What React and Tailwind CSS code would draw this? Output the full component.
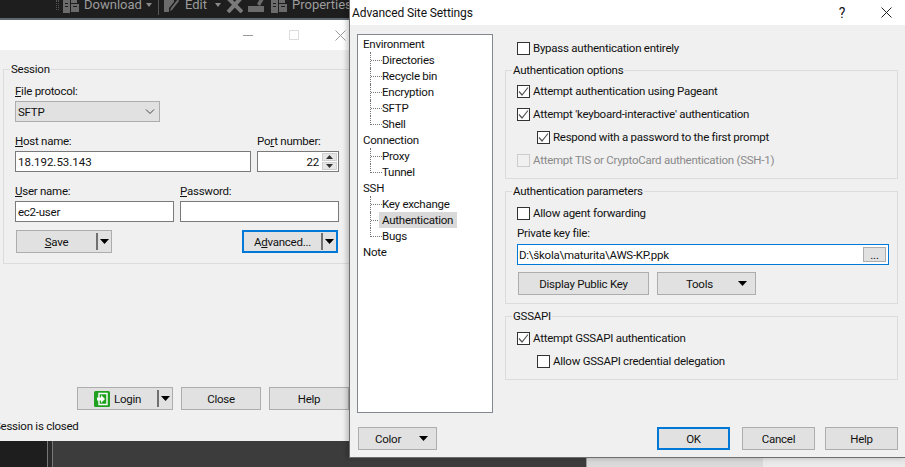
const FONT = "font-['Roboto','Open_Sans',sans-serif] text-[11.5px] tracking-[-0.25px] leading-4 text-[#111]";

const Btn = ({ children, focused, className = "" }) => (
  <div
    className={`flex h-[23px] items-center justify-center bg-[#e1e1e1] ${
      focused ? "border-2 border-[#0078d7]" : "border border-[#adadad]"
    } ${className}`}
  >
    {children}
  </div>
);

const Caret = () => (
  <svg width="9" height="5" viewBox="0 0 9 5" className="shrink-0">
    <path d="M0 0h9L4.5 5z" fill="#000" />
  </svg>
);

// button with the little divider + arrow on the right
const SplitBtn = ({ children, focused, className }) => (
  <Btn focused={focused} className={`pr-[2px] ${className}`}>
    <div className="flex flex-1 items-center justify-center gap-1">{children}</div>
    <div className="mr-[2px] h-[17px] w-[2px] bg-[#707070]" />
    <Caret />
  </Btn>
);

const Check = ({ label, checked, disabled, className = "" }) => (
  <div className={`flex h-4 items-center gap-[3px] ${className}`}>
    <div
      className={`flex h-[13px] w-[13px] shrink-0 items-center justify-center border ${
        disabled ? "border-[#cccccc] bg-[#f0f0f0]" : "border-[#333333] bg-white"
      }`}
    >
      {checked && (
        <svg width="11" height="11" viewBox="0 0 11 11">
          <path d="M1 5.5L4 9L10 1.5" fill="none" stroke="#555" strokeWidth="1.2" />
        </svg>
      )}
    </div>
    <span className={disabled ? "text-[#8a8a8a]" : ""}>{label}</span>
  </div>
);

const Group = ({ title, className = "", children }) => (
  <div className={`border border-[#dcdcdc] pl-[11px] ${className}`}>
    <div className="-mt-[9px] -ml-[5px] h-4 w-fit bg-[#f0f0f0] px-[1px]">{title}</div>
    {children}
  </div>
);

const Field = ({ children, className = "" }) => (
  <div className={`flex h-[21px] items-center border border-[#7a7a7a] bg-white px-[2px] ${className}`}>
    {children}
  </div>
);

const treeData = [
  { name: "Environment", kids: ["Directories", "Recycle bin", "Encryption", "SFTP", "Shell"] },
  { name: "Connection", kids: ["Proxy", "Tunnel"] },
  { name: "SSH", kids: ["Key exchange", "Authentication", "Bugs"] },
  { name: "Note", kids: [] },
];

const Tree = () => (
  <div className="h-[379px] w-[136px] shrink-0 border border-[#828790] bg-white pt-[1px] pl-[5px]">
    {treeData.map((node) => (
      <div key={node.name}>
        <div className="h-4">{node.name}</div>
        {node.kids.map((kid, i) => {
          const last = i === node.kids.length - 1;
          return (
            <div key={kid} className="flex h-4 pl-[7px]">
              {last ? (
                <div className="h-[9px] w-[12px] border-b border-l border-dotted border-[#777]" />
              ) : (
                <div className="flex h-4 w-[12px] items-center border-l border-dotted border-[#777]">
                  <div className="w-full border-t border-dotted border-[#777]" />
                </div>
              )}
              <span className={kid === "Authentication" ? "-ml-[3px] w-[78px] bg-[#d9d9d9] pl-[3px]" : ""}>
                {kid}
              </span>
            </div>
          );
        })}
      </div>
    ))}
  </div>
);

const DocIcon = () => (
  <svg width="16" height="16" viewBox="0 0 16 16" fill="#6b6b6b">
    <path d="M0 3h7v13H0zM8 1h6v5H8zM8 7h8v8H8z" />
    <path d="M2 6h3v1H2zM2 9h3v1H2zM10 9h4v1h-4z" fill="#1e1e1e" />
  </svg>
);

const BarCaret = () => (
  <svg width="6" height="4" viewBox="0 0 6 4" className="shrink-0">
    <path d="M0 0h6L3 4z" fill="#8a8a8a" />
  </svg>
);

const Toolbar = () => (
  <div className="h-[20px] shrink-0 border-b-2 border-[#5e686e] bg-[#1e1e1e]">
    <div className="flex h-[10px] items-center text-[13px] tracking-normal text-[#9c9c9c]">
      <div className="ml-[56px] mr-[4px] h-[10px] w-[3px] border-x border-dotted border-[#555]" />
      <DocIcon />
      <span className="ml-[5px] w-[54px]">Download</span>
      <div className="ml-[8px]"><BarCaret /></div>
      <div className="ml-[6px] h-[20px] w-px bg-[#555]" />
      <svg width="15" height="16" viewBox="0 0 15 16" fill="#6b6b6b" className="ml-[5px]">
        <path d="M0 2h10v3l-5 6v4H0zM7 11l7-9 1 2-7 9-2 1z" />
      </svg>
      <span className="ml-[6px] w-[20px]">Edit</span>
      <div className="ml-[10px]"><BarCaret /></div>
      <svg width="17" height="16" viewBox="0 0 17 16" className="ml-[5px]">
        <path d="M2 1l14 14M15 1L2 15" stroke="#7a7a7a" strokeWidth="4" />
      </svg>
      <svg width="16" height="16" viewBox="0 0 16 16" fill="#6b6b6b" className="ml-[5px]">
        <path d="M0 9h16v6H0zM9 7l4-7 3 2-4 7z" />
      </svg>
      <div className="ml-[7px]"><DocIcon /></div>
      <span className="ml-[5px]">Properties</span>
    </div>
  </div>
);

const SessionWindow = () => (
  <div className="absolute top-[20px] left-0 h-[421px] w-[349px] bg-[#f0f0f0]">
    <div className="flex h-[30px] items-center bg-white text-[#bbb]">
      <div className="ml-[243px] h-px w-[10px] bg-[#999]" />
      <div className="ml-[36px] h-[10px] w-[10px] border border-[#ddd]" />
      <svg width="11" height="11" viewBox="0 0 11 11" className="ml-[36px]">
        <path d="M0.5 0.5l10 10M10.5 0.5l-10 10" stroke="#999" />
      </svg>
    </div>

    <div className="mt-[19px] ml-[3px] h-[195px] border border-r-0 border-[#dcdcdc] pl-[11px]">
      <div className="-mt-[9px] -ml-[5px] h-4 w-fit bg-[#f0f0f0] px-[1px]">Session</div>
      <div className="mt-[6px] h-4">
        <u>F</u>ile protocol:
      </div>
      <div className="mt-[2px] flex h-[21px] w-[145px] items-center justify-between border border-[#adadad] bg-[#e1e1e1] pr-[4px] pl-[2px]">
        <span>SFTP</span>
        <svg width="10" height="6" viewBox="0 0 10 6">
          <path d="M1 0.5l4 4 4-4" fill="none" stroke="#444" />
        </svg>
      </div>

      <div className="mt-[11px] flex w-[324px] justify-between">
        <div>
          <u>H</u>ost name:
        </div>
        <div className="w-[82px]">
          Po<u>r</u>t number:
        </div>
      </div>
      <div className="mt-[2px] flex w-[324px] justify-between">
        <Field className="w-[236px] tracking-[0px]">18.192.53.143</Field>
        <Field className="w-[82px] justify-end !pr-[1px]">
          <span className="mr-[3px]">22</span>
          <div className="flex w-[15px] flex-col gap-px">
            <div className="flex h-[8px] items-center justify-center bg-[#e6e6e6] border border-[#cfcfcf]">
              <svg width="7" height="4" viewBox="0 0 7 4"><path d="M3.5 0L7 4H0z" fill="#333" /></svg>
            </div>
            <div className="flex h-[8px] items-center justify-center bg-[#e6e6e6] border border-[#cfcfcf]">
              <svg width="7" height="4" viewBox="0 0 7 4"><path d="M0 0h7L3.5 4z" fill="#333" /></svg>
            </div>
          </div>
        </Field>
      </div>

      <div className="mt-[11px] flex w-[324px]">
        <div className="w-[165px]">
          <u>U</u>ser name:
        </div>
        <div>
          <u>P</u>assword:
        </div>
      </div>
      <div className="mt-[2px] flex w-[324px] justify-between">
        <Field className="w-[159px]">ec2-user</Field>
        <Field className="w-[159px]" />
      </div>

      <div className="mt-[8px] ml-[1px] flex w-[322px] justify-between">
        <SplitBtn className="w-[96px]">
          <span>
            <u>S</u>ave
          </span>
        </SplitBtn>
        <SplitBtn focused className="w-[96px]">
          <span>
            A<u>d</u>vanced...
          </span>
        </SplitBtn>
      </div>
    </div>

    <div className="mt-[123px] ml-[77px] flex gap-[8px]">
      <SplitBtn className="w-[96px]">
        <svg width="16" height="16" viewBox="0 0 16 16">
          <rect width="16" height="16" rx="1.5" fill="#1fa01f" />
          <path d="M5 2.5h8v11H5z" fill="none" stroke="#fff" strokeWidth="1.4" />
          <path d="M3 6.5h4V4l4 4-4 4V9.5H3z" fill="#fff" />
        </svg>
        <span>Login</span>
      </SplitBtn>
      <Btn className="w-[80px]">Close</Btn>
      <Btn className="w-[80px]">Help</Btn>
    </div>

    <div className="mt-[8px] -ml-[6px] h-4">Session is closed</div>
  </div>
);

const AdvancedDialog = () => (
  <div className="absolute top-0 left-[349px] h-[458px] w-[556px] border-b border-l border-[#6e6e6e] bg-[#f0f0f0] shadow-[-3px_0_4px_rgba(0,0,0,0.18)]">
    <div className="flex h-[25px] items-center bg-white pl-[2px]">
      <span className="flex-1 text-[12px] tracking-[-0.1px]">Advanced Site Settings</span>
      <span className="mr-[36px] text-[14px]">?</span>
      <svg width="11" height="11" viewBox="0 0 11 11" className="mr-[13px]">
        <path d="M0.5 0.5l10 10M10.5 0.5l-10 10" stroke="#222" />
      </svg>
    </div>

    <div className="flex pt-[9px] pl-[7px]">
      <Tree />
      <div className="ml-[12px] w-[393px] pt-[6px]">
        <Check label="Bypass authentication entirely" className="ml-[12px]" />

        <Group title="Authentication options" className="mt-[14px] h-[109px]">
          <div className="mt-[5px] flex flex-col gap-[7px]">
            <Check label="Attempt authentication using Pageant" checked />
            <Check label="Attempt 'keyboard-interactive' authentication" checked />
            <Check label="Respond with a password to the first prompt" checked className="ml-[20px]" />
            <Check label="Attempt TIS or CryptoCard authentication (SSH-1)" disabled />
          </div>
        </Group>

        <Group title="Authentication parameters" className="mt-[12px] h-[113px]">
          <Check label="Allow agent forwarding" className="mt-[6px]" />
          <div className="mt-[4px] h-4">Private key file:</div>
          <div className="mt-[3px] flex h-[21px] w-[372px] items-center justify-between border border-[#0078d7] bg-white pr-[2px] pl-[1px]">
            <span>D:\škola\maturita\AWS-KP.ppk</span>
            <div className="flex h-[15px] w-[23px] items-center justify-center border border-[#adadad] bg-[#e1e1e1]">
              ...
            </div>
          </div>
          <div className="mt-[7px] ml-[1px] flex gap-[8px]">
            <Btn className="w-[131px]">Display Public Key</Btn>
            <Btn className="w-[99px] pr-[8px] pl-[28px] !justify-between">
              <span>Tools</span>
              <Caret />
            </Btn>
          </div>
        </Group>

        <Group title="GSSAPI" className="mt-[12px] h-[64px]">
          <Check label="Attempt GSSAPI authentication" checked className="mt-[6px]" />
          <Check label="Allow GSSAPI credential delegation" className="mt-[7px] ml-[20px]" />
        </Group>
      </div>
    </div>

    <div className="mt-[14px] flex pl-[8px]">
      <Btn className="w-[79px] pr-[8px] pl-[16px] !justify-between">
        <span>Color</span>
        <Caret />
      </Btn>
      <Btn focused className="ml-[220px] w-[73px]">OK</Btn>
      <Btn className="ml-[12px] w-[73px]">Cancel</Btn>
      <Btn className="ml-[10px] w-[73px]">Help</Btn>
    </div>
  </div>
);

export default function App() {
  return (
    <div className={`relative flex h-[467px] w-[905px] flex-col overflow-hidden bg-[#3c3c3c] ${FONT}`}>
      <Toolbar />
      <div className="flex-1" />
      {/* what shows of the desktop under the two windows */}
      <div className="flex h-[26px] shrink-0">
        <div className="w-[47px] bg-[#1e1e1e]" />
        <div className="w-[6px] border-x border-[#777] bg-[#2a2a2a]" />
        <div className="w-[533px] bg-[#3c3c3c]" />
        <div className="w-[177px] border-l border-[#999] bg-gradient-to-b from-[#bdbdbd] to-[#dcdcdc]" />
        <div className="flex-1 bg-gradient-to-b from-[#cfcfcf] to-[#ececec]" />
      </div>
      <SessionWindow />
      <AdvancedDialog />
    </div>
  );
}
